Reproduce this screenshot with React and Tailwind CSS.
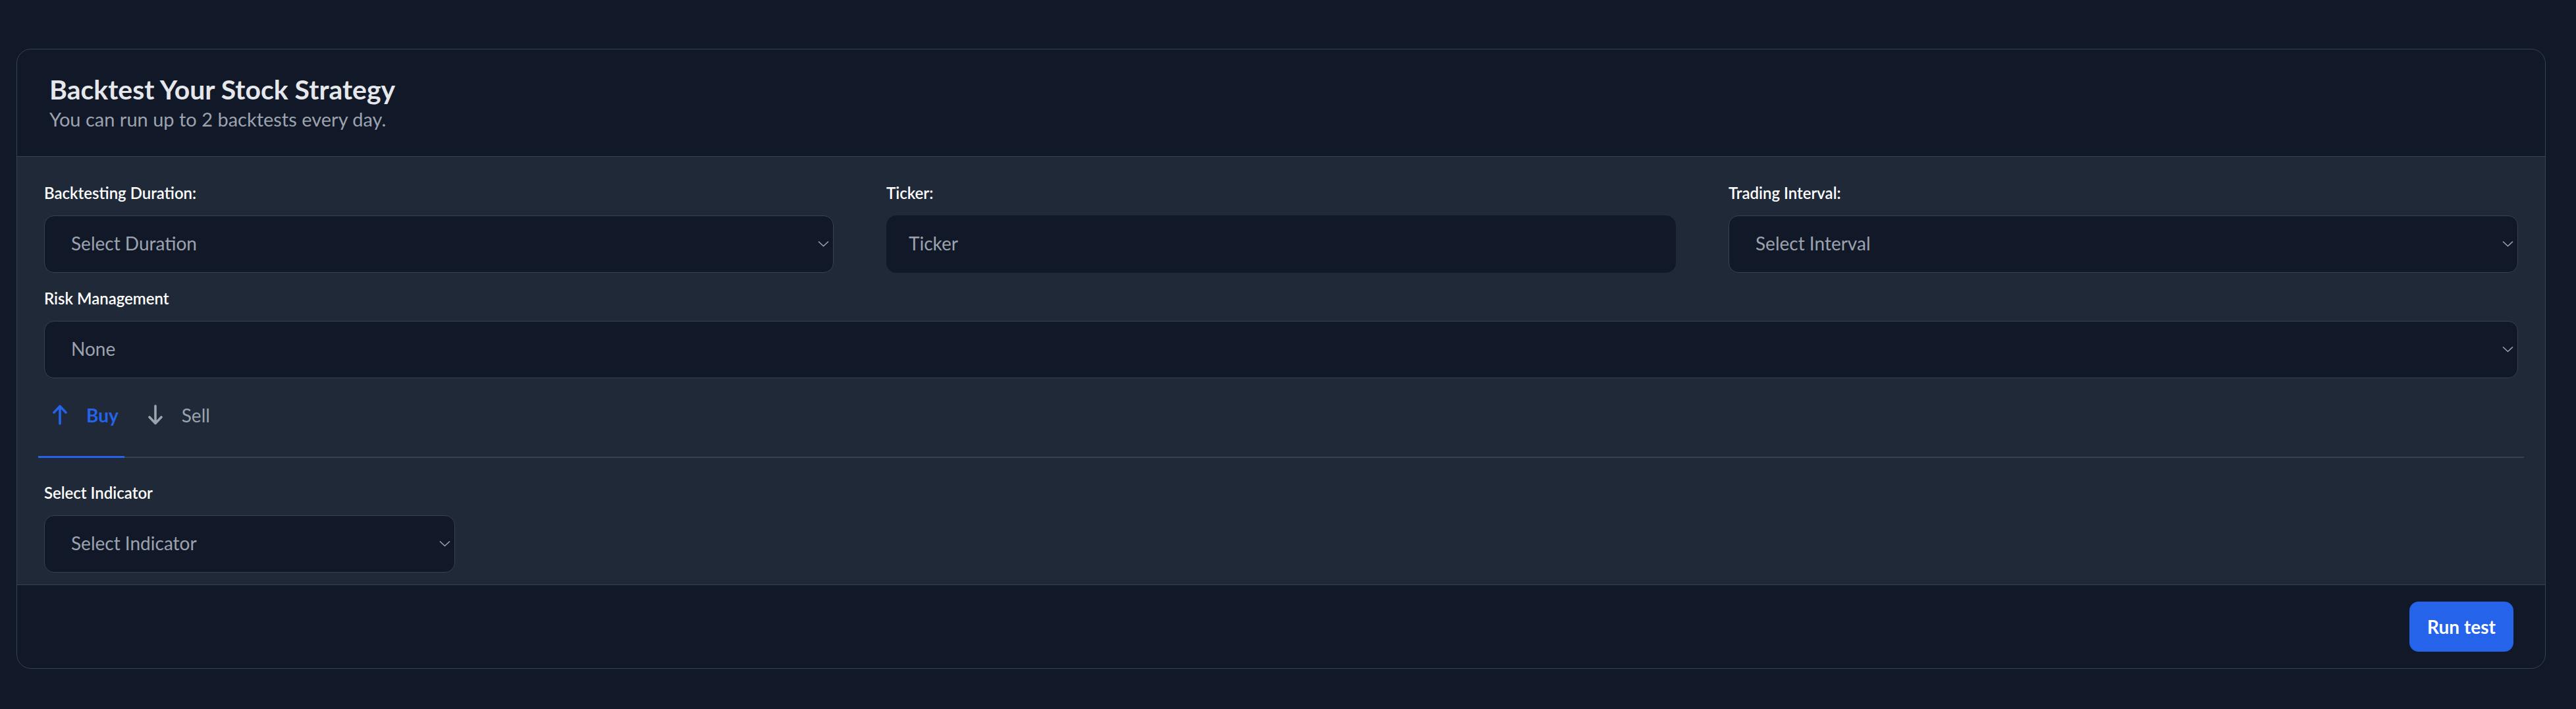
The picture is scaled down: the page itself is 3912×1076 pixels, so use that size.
import React, { useState } from "react";

const Chevron = () => (
  <svg
    width="17"
    height="10"
    viewBox="0 0 17 10"
    fill="none"
    className="pointer-events-none absolute right-[7px] top-1/2 -translate-y-1/2"
  >
    <path d="M1 1.5L8.5 8.5L16 1.5" stroke="#9ca3af" strokeWidth="1.6" />
  </svg>
);

const ArrowUp = ({ color }) => (
  <svg width="22" height="31" viewBox="0 0 22 31" fill="none">
    <path
      d="M2 12L11 2.5L20 12M11 2.5V29"
      stroke={color}
      strokeWidth="3.6"
      strokeLinecap="round"
      strokeLinejoin="round"
    />
  </svg>
);

const ArrowDown = ({ color }) => (
  <svg width="22" height="31" viewBox="0 0 22 31" fill="none">
    <path
      d="M2 19L11 28.5L20 19M11 28.5V2"
      stroke={color}
      strokeWidth="3.6"
      strokeLinecap="round"
      strokeLinejoin="round"
    />
  </svg>
);

function Field({ label, children, className = "" }) {
  return (
    <div className={className}>
      <label className="mb-[18px] block text-[24px] font-semibold leading-[32px] text-white">
        {label}
      </label>
      {children}
    </div>
  );
}

function SelectBox({ placeholder, className = "w-full" }) {
  return (
    <div className={`relative h-[87px] ${className}`}>
      <select className="h-full w-full appearance-none rounded-[15px] border border-[#374151] bg-[#111827] pb-[2px] pl-[40px] text-[28px] text-[#9ca3af] outline-none">
        <option>{placeholder}</option>
      </select>
      <Chevron />
    </div>
  );
}

function Tab({ active, onClick, icon, children }) {
  return (
    <button
      onClick={onClick}
      className={`-mb-[2px] flex items-center gap-[29px] border-b-[3px] pt-[15px] pb-[41px] pr-[9px] pl-[22px] text-[28px] leading-[42px] ${
        active
          ? "border-[#2563eb] font-bold text-[#2563eb]"
          : "border-transparent text-[#9ca3af]"
      }`}
    >
      {icon}
      {children}
    </button>
  );
}

export default function App() {
  const [side, setSide] = useState("buy");

  return (
    <div className="min-h-screen bg-[#111827] pt-[74px] pr-[46px] pl-[25px] font-['Lato','Noto_Sans',sans-serif]">
      <div className="overflow-hidden rounded-[22px] border border-[#374151] bg-[#111827]">
        {/* header */}
        <div className="px-[49px] pt-[36px] pb-[38px]">
          <h1 className="text-[41px] leading-[1.2] font-bold text-[#e5e7eb]">
            Backtest Your Stock Strategy
          </h1>
          <p className="mt-[4px] text-[29px] leading-[1.2] text-[#9ca3af]">
            You can run up to 2 backtests every day.
          </p>
        </div>

        {/* body */}
        <div className="border-y border-[#374151] bg-[#1f2937] px-[41px] pt-[39px] pb-[18px]">
          <div className="grid grid-cols-3 gap-x-[80px]">
            <Field label="Backtesting Duration:">
              <SelectBox placeholder="Select Duration" />
            </Field>
            <Field label="Ticker:">
              <input
                placeholder="Ticker"
                className="h-[87px] w-full rounded-[15px] border border-[#111827] bg-[#111827] pb-[2px] pl-[33px] text-[28px] text-white outline-none placeholder:text-[#9ca3af]"
              />
            </Field>
            <Field label="Trading Interval:">
              <SelectBox placeholder="Select Interval" />
            </Field>
          </div>

          <Field label="Risk Management" className="mt-[23px]">
            <SelectBox placeholder="None" />
          </Field>

          {/* buy / sell tabs */}
          <div className="-mx-[9px] mt-[20px] flex gap-[14px] border-b-2 border-[#374151]">
            <Tab
              active={side === "buy"}
              onClick={() => setSide("buy")}
              icon={<ArrowUp color={side === "buy" ? "#2563eb" : "#9ca3af"} />}
            >
              Buy
            </Tab>
            <Tab
              active={side === "sell"}
              onClick={() => setSide("sell")}
              icon={<ArrowDown color={side === "sell" ? "#2563eb" : "#9ca3af"} />}
            >
              Sell
            </Tab>
          </div>

          <Field label="Select Indicator" className="mt-[37px]">
            <SelectBox placeholder="Select Indicator" className="w-[624px]" />
          </Field>
        </div>

        {/* footer */}
        <div className="flex justify-end px-[48px] py-[25px]">
          <button className="h-[76px] w-[158px] rounded-[14px] bg-[#2563eb] text-[28px] font-bold text-white">
            Run test
          </button>
        </div>
      </div>
    </div>
  );
}
